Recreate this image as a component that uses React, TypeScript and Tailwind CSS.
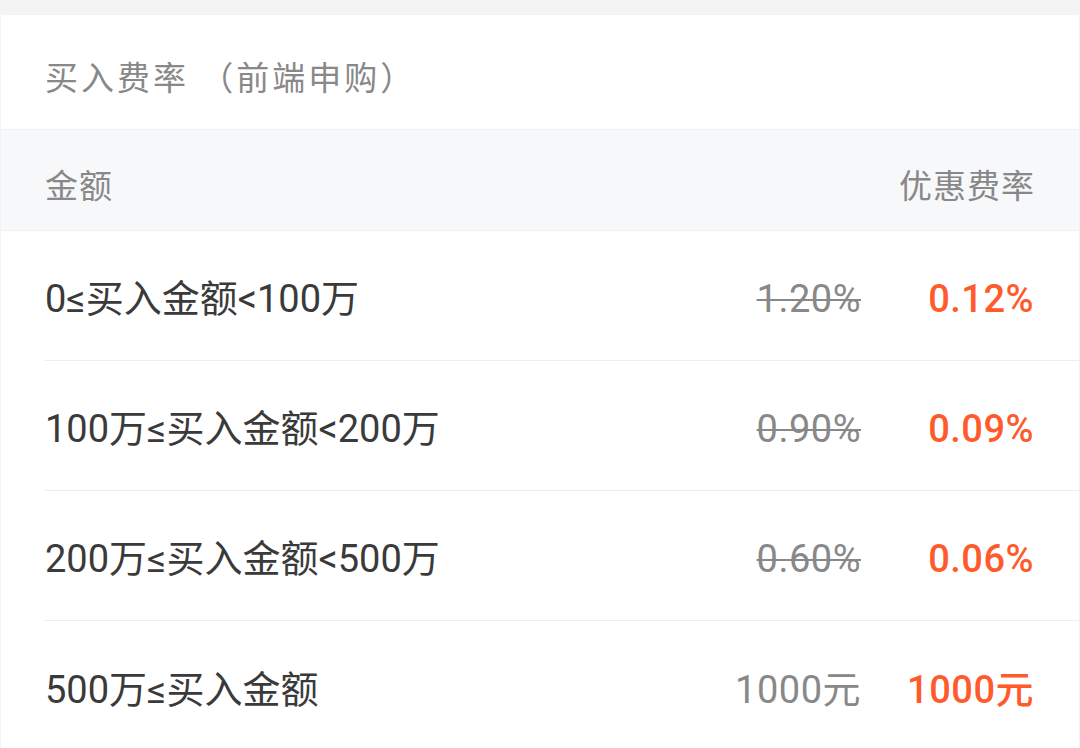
import React from "react";

const ROWS = [
  { range: "0≤买入金额<100万", origin: "1.20%", rate: "0.12%", strike: true },
  { range: "100万≤买入金额<200万", origin: "0.90%", rate: "0.09%", strike: true },
  { range: "200万≤买入金额<500万", origin: "0.60%", rate: "0.06%", strike: true },
  { range: "500万≤买入金额", origin: "1000元", rate: "1000元", strike: false },
];

export default function App() {
  return (
    <div
      className="w-[1080px] h-[748px] overflow-hidden bg-[#f4f4f4] pt-[15px]"
      style={{ fontFamily: 'Roboto, "Noto Sans CJK SC", sans-serif' }}
    >
      <div className="bg-white border-x border-[#f3f3f3] h-full">
        {/* Title */}
        <div className="h-[115px] flex items-center px-[44px] pt-[14px] border-b border-[#efefef]">
          <span className="text-[33px] tracking-[3px] text-[#888888]">买入费率 （前端申购）</span>
        </div>

        {/* Table header */}
        <div className="h-[101px] flex items-center justify-between px-[44px] pt-[14px] bg-[#f7f8fa] border-b border-[#efefef]">
          <span className="text-[33px] tracking-[1px] text-[#888888]">金额</span>
          <span className="text-[33px] tracking-[1px] text-[#888888]">优惠费率</span>
        </div>

        {/* Rows */}
        <div className="pl-[44px]">
          {ROWS.map((row, i) => (
            <div
              key={i}
              className={
                "h-[130px] flex items-center pr-[45px] pt-[8px] " +
                (i < ROWS.length - 1 ? "border-b border-[#ececec]" : "")
              }
            >
              <span className="flex-1 text-[38px] text-[#3a3a3a]">{row.range}</span>
              <span
                className={
                  "text-[38px] tracking-[0.5px] text-[#888888] " +
                  (row.strike ? "line-through decoration-2" : "")
                }
              >
                {row.origin}
              </span>
              <span className="w-[173px] text-right text-[38px] tracking-[0.5px] font-medium text-[#ff5a2c]">
                {row.rate}
              </span>
            </div>
          ))}
        </div>
      </div>
    </div>
  );
}
